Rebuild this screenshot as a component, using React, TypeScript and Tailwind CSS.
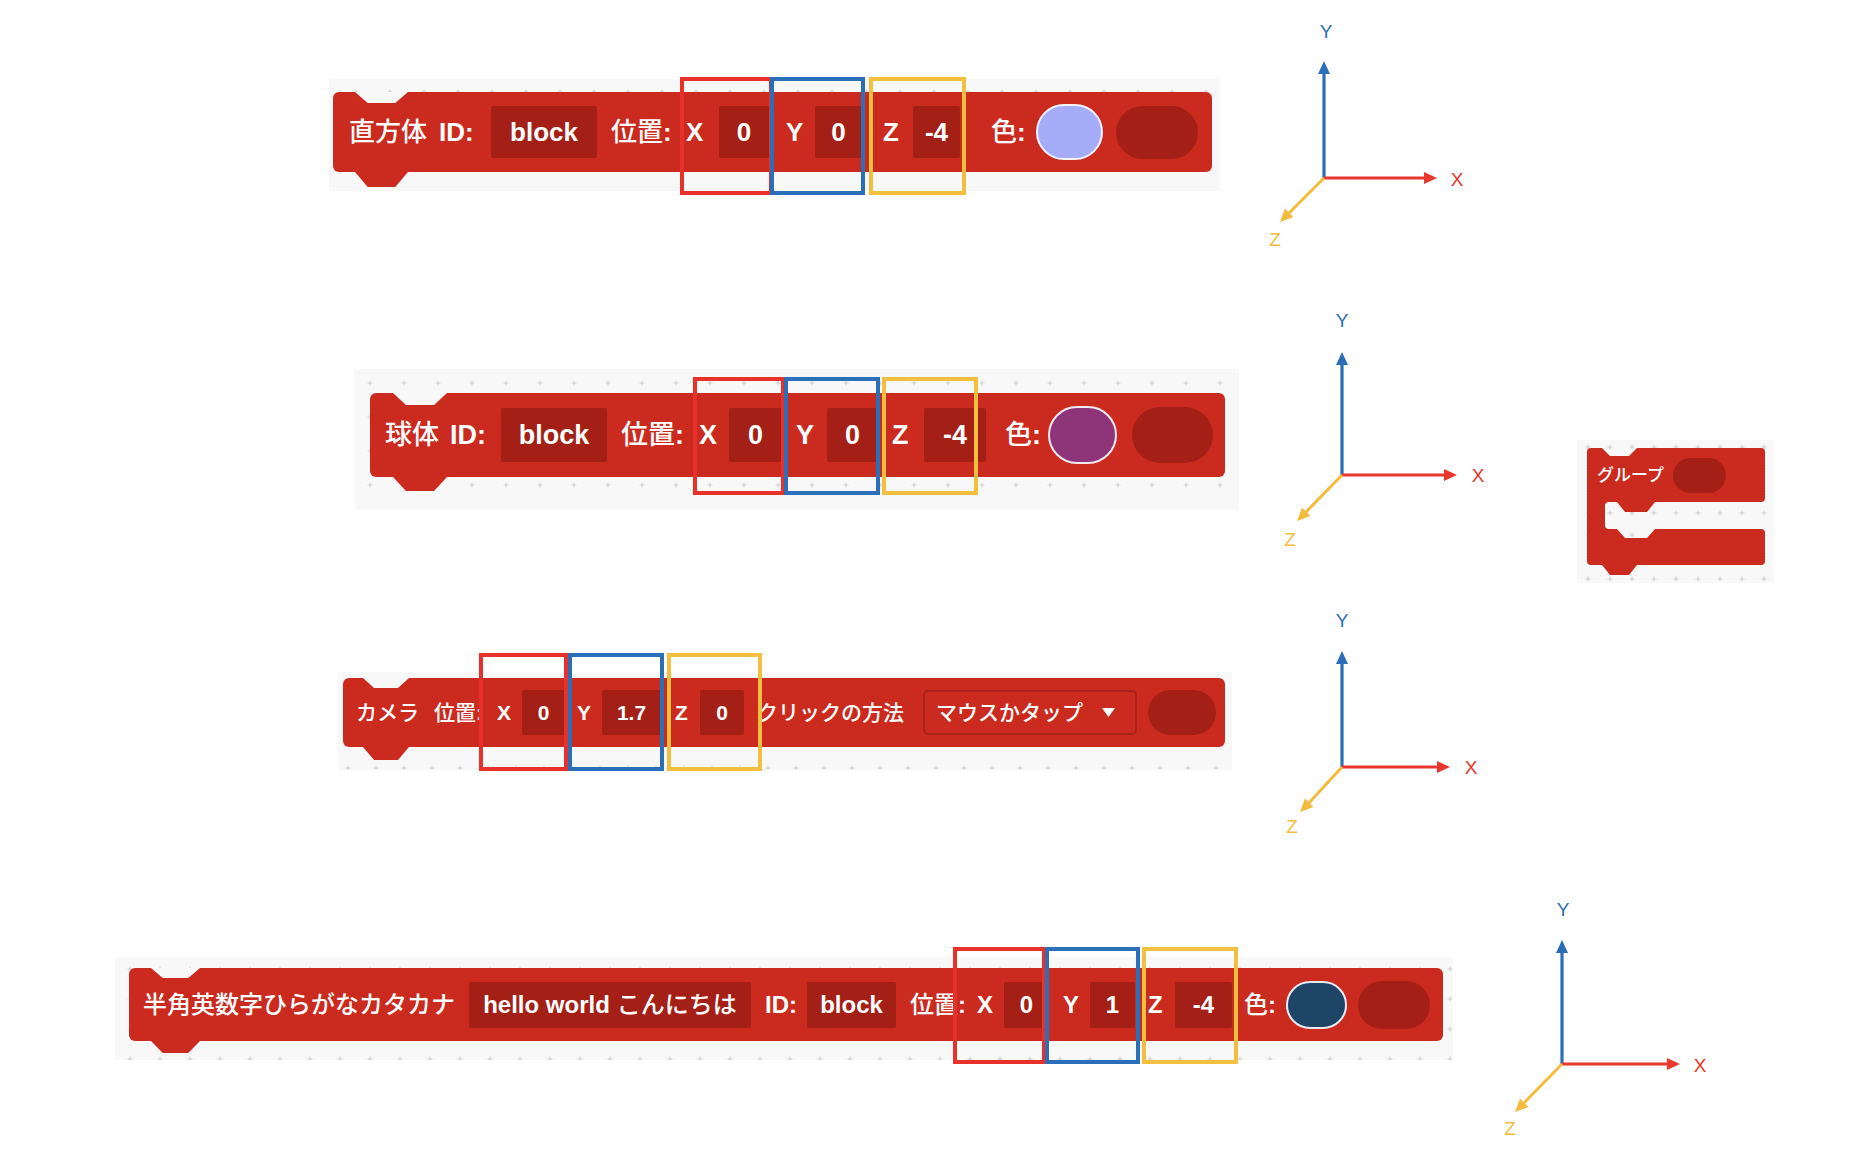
import React from "react";

type AxesProps = {
  className: string;
  ox: number;
  oy: number;
  ytip: number;
  yl: [number, number];
  xtip: number;
  xl: [number, number];
  zt: [number, number];
  zl: [number, number];
};

function Axes({ className, ox, oy, ytip, yl, xtip, xl, zt, zl }: AxesProps) {
  const [zx, zy] = zt;
  return (
    <svg className={className} width="220" height="250" viewBox="0 0 220 250">
      <line x1={ox} y1={oy} x2={ox} y2={ytip + 10} stroke="#2b6db7" strokeWidth="3.2" />
      <polygon points={`${ox},${ytip} ${ox - 6},${ytip + 13} ${ox + 6},${ytip + 13}`} fill="#2b6db7" />
      <line x1={ox} y1={oy} x2={xtip - 10} y2={oy} stroke="#e8372c" strokeWidth="3.2" />
      <polygon points={`${xtip},${oy} ${xtip - 13},${oy - 6} ${xtip - 13},${oy + 6}`} fill="#e8372c" />
      <line x1={ox} y1={oy} x2={zx + 7} y2={zy - 7} stroke="#f4bc3c" strokeWidth="3" />
      <polygon points={`${zx},${zy} ${zx + 13.4},${zy - 5} ${zx + 5},${zy - 13.4}`} fill="#f4bc3c" />
      <text x={yl[0]} y={yl[1]} fill="#2b6db7" fontSize="19" textAnchor="middle" dominantBaseline="central" fontFamily="Liberation Sans, sans-serif">Y</text>
      <text x={xl[0]} y={xl[1]} fill="#e8372c" fontSize="19" textAnchor="middle" dominantBaseline="central" fontFamily="Liberation Sans, sans-serif">X</text>
      <text x={zl[0]} y={zl[1]} fill="#f4bc3c" fontSize="19" textAnchor="middle" dominantBaseline="central" fontFamily="Liberation Sans, sans-serif">Z</text>
    </svg>
  );
}

function GridBg({ id, size, ox, oy }: { id: string; size: number; ox: number; oy: number }) {
  const c = size / 2;
  return (
    <svg className="absolute inset-0 h-full w-full" aria-hidden="true">
      <defs>
        <pattern id={id} width={size} height={size} patternUnits="userSpaceOnUse" x={ox} y={oy}>
          <path d={`M ${c - 2.5} ${c} h 5 M ${c} ${c - 2.5} v 5`} stroke="#cdcdcd" strokeWidth="1" />
        </pattern>
      </defs>
      <rect width="100%" height="100%" fill={`url(#${id})`} />
    </svg>
  );
}

function Field({ className, children }: { className: string; children: React.ReactNode }) {
  return (
    <div className={`flex shrink-0 items-center justify-center whitespace-nowrap rounded-[2px] bg-[#a41f16] font-bold ${className}`}>
      {children}
    </div>
  );
}

function L({ className, children }: { className: string; children: React.ReactNode }) {
  return <div className={`shrink-0 whitespace-nowrap ${className}`}>{children}</div>;
}

const clip = "[clip-path:polygon(0_0,100%_0,76%_100%,24%_100%)]";

export default function App() {
  return (
    <div className="flex h-[1176px] w-[1872px] flex-col overflow-hidden bg-white text-white [font-family:'Liberation_Sans','Noto_Sans_CJK_JP',sans-serif]">
      {/* Row 1 */}
      <div className="flex h-[260px] shrink-0 items-start">
        <div className="relative ml-[329px] mt-[79px] h-[112px] w-[891px] shrink-0 bg-[#f8f8f8] pl-[4px] pt-[13px]">
          <GridBg id="g1" size={34} ox={10} oy={-4} />
          <div className="relative flex h-[80px] w-[879px] items-center rounded-[6px] bg-[#cb2b1f] pl-[16px] text-[26px] leading-none">
            <div className={`absolute left-[22px] top-0 h-[11px] w-[53px] bg-[#f8f8f8] ${clip}`} />
            <div className={`absolute left-[22px] top-full h-[15px] w-[53px] bg-[#cb2b1f] ${clip}`} />
            <L className="w-[142px]">
              <span className="font-medium">直方体</span>
              <span className="ml-[12px] font-bold">ID:</span>
            </L>
            <Field className="h-[52px] w-[106px]">block</Field>
            <L className="ml-[14px] w-[75px] font-medium">
              位置<span className="font-bold">:</span>
            </L>
            <L className="w-[33px] font-bold">X</L>
            <Field className="h-[52px] w-[50px]">0</Field>
            <L className="ml-[17px] w-[29px] font-bold">Y</L>
            <Field className="h-[52px] w-[47px]">0</Field>
            <L className="ml-[21px] w-[30px] font-bold">Z</L>
            <Field className="h-[52px] w-[47px]">-4</Field>
            <L className="ml-[31px] w-[45px] font-medium">
              色<span className="font-bold">:</span>
            </L>
            <div className="h-[56px] w-[67px] shrink-0 rounded-full border-2 border-[#f4f4ff] bg-[#a5adf9]" />
            <div className="ml-[13px] h-[53px] w-[82px] shrink-0 rounded-full bg-[#a41f16]" />
          </div>
          <div className="absolute left-[351px] top-[-2px] h-[118px] w-[93px] border-4 border-[#e8312a]" />
          <div className="absolute left-[441px] top-[-2px] h-[118px] w-[95px] border-4 border-[#2b6fb8]" />
          <div className="absolute left-[540px] top-[-2px] h-[118px] w-[97px] border-4 border-[#f4bf3f]" />
        </div>
        <Axes className="ml-[40px] mt-[10px] shrink-0" ox={64} oy={168} ytip={51} yl={[66, 21]} xtip={177} xl={[197, 169]} zt={[20, 212]} zl={[15, 229]} />
      </div>

      {/* Row 2 */}
      <div className="flex h-[330px] shrink-0 items-start">
        <div className="relative ml-[354px] mt-[109px] h-[141px] w-[885px] shrink-0 bg-[#f8f8f8] pl-[16px] pt-[24px]">
          <GridBg id="g2" size={34} ox={-1} oy={-3} />
          <div className="relative flex h-[84px] w-[855px] items-center rounded-[6px] bg-[#cb2b1f] pl-[15px] text-[27px] leading-none">
            <div className={`absolute left-[23px] top-0 h-[12px] w-[54px] bg-[#f8f8f8] ${clip}`} />
            <div className={`absolute left-[23px] top-full h-[14px] w-[54px] bg-[#cb2b1f] ${clip}`} />
            <L className="w-[116px]">
              <span className="font-medium">球体</span>
              <span className="ml-[11px] font-bold">ID:</span>
            </L>
            <Field className="h-[54px] w-[106px]">block</Field>
            <L className="ml-[14px] w-[78px] font-medium">
              位置<span className="font-bold">:</span>
            </L>
            <L className="w-[30px] font-bold">X</L>
            <Field className="h-[54px] w-[53px]">0</Field>
            <L className="ml-[14px] w-[31px] font-bold">Y</L>
            <Field className="h-[54px] w-[51px]">0</Field>
            <L className="ml-[14px] w-[32px] font-bold">Z</L>
            <Field className="h-[54px] w-[62px]">-4</Field>
            <L className="ml-[19px] w-[43px] font-medium">
              色<span className="font-bold">:</span>
            </L>
            <div className="h-[58px] w-[69px] shrink-0 rounded-full border-2 border-[#f3e9f0] bg-[#8e3479]" />
            <div className="ml-[15px] h-[56px] w-[81px] shrink-0 rounded-full bg-[#a41f16]" />
          </div>
          <div className="absolute left-[339px] top-[8px] h-[118px] w-[92px] border-4 border-[#e8312a]" />
          <div className="absolute left-[430px] top-[8px] h-[118px] w-[96px] border-4 border-[#2b6fb8]" />
          <div className="absolute left-[528px] top-[8px] h-[118px] w-[96px] border-4 border-[#f4bf3f]" />
        </div>
        <Axes className="ml-[39px] mt-[40px] shrink-0" ox={64} oy={175} ytip={52} yl={[64, 20]} xtip={179} xl={[200, 175]} zt={[19, 221]} zl={[12, 239]} />
        <div className="relative ml-[79px] mt-[180px] h-[143px] w-[197px] shrink-0 bg-[#f8f8f8]">
          <GridBg id="g5" size={22} ox={0} oy={-4} />
          <svg className="absolute inset-0" width="197" height="143" viewBox="0 0 197 143">
            <path
              d="M 14 8 L 25 8 L 33 16 L 52 16 L 60 8 L 184 8 Q 188 8 188 12 L 188 58 Q 188 62 184 62 L 78 62 L 70 72 L 48 72 L 40 62 L 32 62 Q 28 62 28 66 L 28 85 Q 28 89 32 89 L 40 89 L 48 98 L 70 98 L 78 89 L 184 89 Q 188 89 188 93 L 188 121 Q 188 125 184 125 L 60 125 L 52 135 L 33 135 L 25 125 L 14 125 Q 10 125 10 121 L 10 12 Q 10 8 14 8 Z"
              fill="#cb2b1f"
            />
          </svg>
          <div className="relative flex h-[70px] items-center pl-[20px] text-[17px] leading-none">
            <L className="w-[76px] font-medium">グループ</L>
            <div className="h-[35px] w-[53px] shrink-0 rounded-full bg-[#a41f16]" />
          </div>
        </div>
      </div>

      {/* Row 3 */}
      <div className="flex h-[270px] shrink-0 items-start">
        <div className="relative ml-[338px] mt-[82px] h-[98px] w-[894px] shrink-0 bg-[#f8f8f8] pl-[5px] pt-[6px]">
          <GridBg id="g3" size={28} ox={-4} oy={-2} />
          <div className="relative flex h-[69px] w-[882px] items-center rounded-[6px] bg-[#cb2b1f] pl-[13px] text-[21px] leading-none">
            <div className={`absolute left-[20px] top-0 h-[10px] w-[46px] bg-[#f8f8f8] ${clip}`} />
            <div className={`absolute left-[20px] top-full h-[13px] w-[46px] bg-[#cb2b1f] ${clip}`} />
            <L className="w-[78px] font-medium">カメラ</L>
            <L className="w-[63px] font-medium">
              位置<span className="font-bold">:</span>
            </L>
            <L className="w-[25px] font-bold">X</L>
            <Field className="h-[45px] w-[43px]">0</Field>
            <L className="ml-[12px] w-[25px] font-bold">Y</L>
            <Field className="h-[45px] w-[59px]">1.7</Field>
            <L className="ml-[14px] w-[25px] font-bold">Z</L>
            <Field className="h-[45px] w-[44px]">0</Field>
            <L className="ml-[13px] w-[166px] font-medium">クリックの方法</L>
            <div className="flex h-[45px] w-[214px] shrink-0 items-center rounded-[5px] border-2 border-[#a8231a] pl-[11px]">
              <span className="whitespace-nowrap font-medium">マウスかタップ</span>
              <svg className="ml-[19px]" width="13" height="9" viewBox="0 0 13 9">
                <polygon points="0,0 13,0 6.5,9" fill="#ffffff" />
              </svg>
            </div>
            <div className="ml-[11px] h-[45px] w-[68px] shrink-0 rounded-full bg-[#a41f16]" />
          </div>
          <div className="absolute left-[141px] top-[-19px] h-[118px] w-[89px] border-4 border-[#e8312a]" />
          <div className="absolute left-[230px] top-[-19px] h-[118px] w-[96px] border-4 border-[#2b6fb8]" />
          <div className="absolute left-[329px] top-[-19px] h-[118px] w-[95px] border-4 border-[#f4bf3f]" />
        </div>
        <Axes className="ml-[46px] mt-[10px] shrink-0" ox={64} oy={167} ytip={51} yl={[64, 20]} xtip={172} xl={[193, 167]} zt={[22, 212]} zl={[14, 226]} />
      </div>

      {/* Row 4 */}
      <div className="flex h-[316px] shrink-0 items-start">
        <div className="relative ml-[115px] mt-[97px] h-[103px] w-[1338px] shrink-0 bg-[#f8f8f8] pl-[14px] pt-[11px]">
          <GridBg id="g4" size={30} ox={0} oy={-3} />
          <div className="relative flex h-[73px] w-[1314px] items-center rounded-[6px] bg-[#cb2b1f] pl-[14px] text-[24px] leading-none">
            <div className={`absolute left-[22px] top-0 h-[10px] w-[49px] bg-[#f8f8f8] ${clip}`} />
            <div className={`absolute left-[22px] top-full h-[12px] w-[49px] bg-[#cb2b1f] ${clip}`} />
            <L className="w-[326px] font-medium">半角英数字ひらがなカタカナ</L>
            <Field className="h-[46px] w-[282px]">
              <span className="font-bold">hello world</span>
              <span className="ml-[7px] font-medium">こんにちは</span>
            </Field>
            <L className="ml-[14px] w-[42px] font-bold">ID:</L>
            <Field className="h-[46px] w-[89px]">block</Field>
            <L className="ml-[14px] w-[67px] font-medium">
              位置<span className="font-bold">:</span>
            </L>
            <L className="w-[27px] font-bold">X</L>
            <Field className="h-[46px] w-[45px]">0</Field>
            <L className="ml-[14px] w-[27px] font-bold">Y</L>
            <Field className="h-[46px] w-[45px]">1</Field>
            <L className="ml-[13px] w-[27px] font-bold">Z</L>
            <Field className="h-[46px] w-[57px]">-4</Field>
            <L className="ml-[12px] w-[42px] font-medium">
              色<span className="font-bold">:</span>
            </L>
            <div className="h-[48px] w-[61px] shrink-0 rounded-full border-2 border-[#e6ecf2] bg-[#1e4566]" />
            <div className="ml-[11px] h-[48px] w-[72px] shrink-0 rounded-full bg-[#a41f16]" />
          </div>
          <div className="absolute left-[838px] top-[-10px] h-[117px] w-[93px] border-4 border-[#e8312a]" />
          <div className="absolute left-[930px] top-[-10px] h-[117px] w-[95px] border-4 border-[#2b6fb8]" />
          <div className="absolute left-[1027px] top-[-10px] h-[117px] w-[96px] border-4 border-[#f4bf3f]" />
        </div>
        <Axes className="ml-[45px] mt-[30px] shrink-0" ox={64} oy={174} ytip={50} yl={[65, 19]} xtip={182} xl={[202, 175]} zt={[17, 222]} zl={[12, 238]} />
      </div>
    </div>
  );
}
